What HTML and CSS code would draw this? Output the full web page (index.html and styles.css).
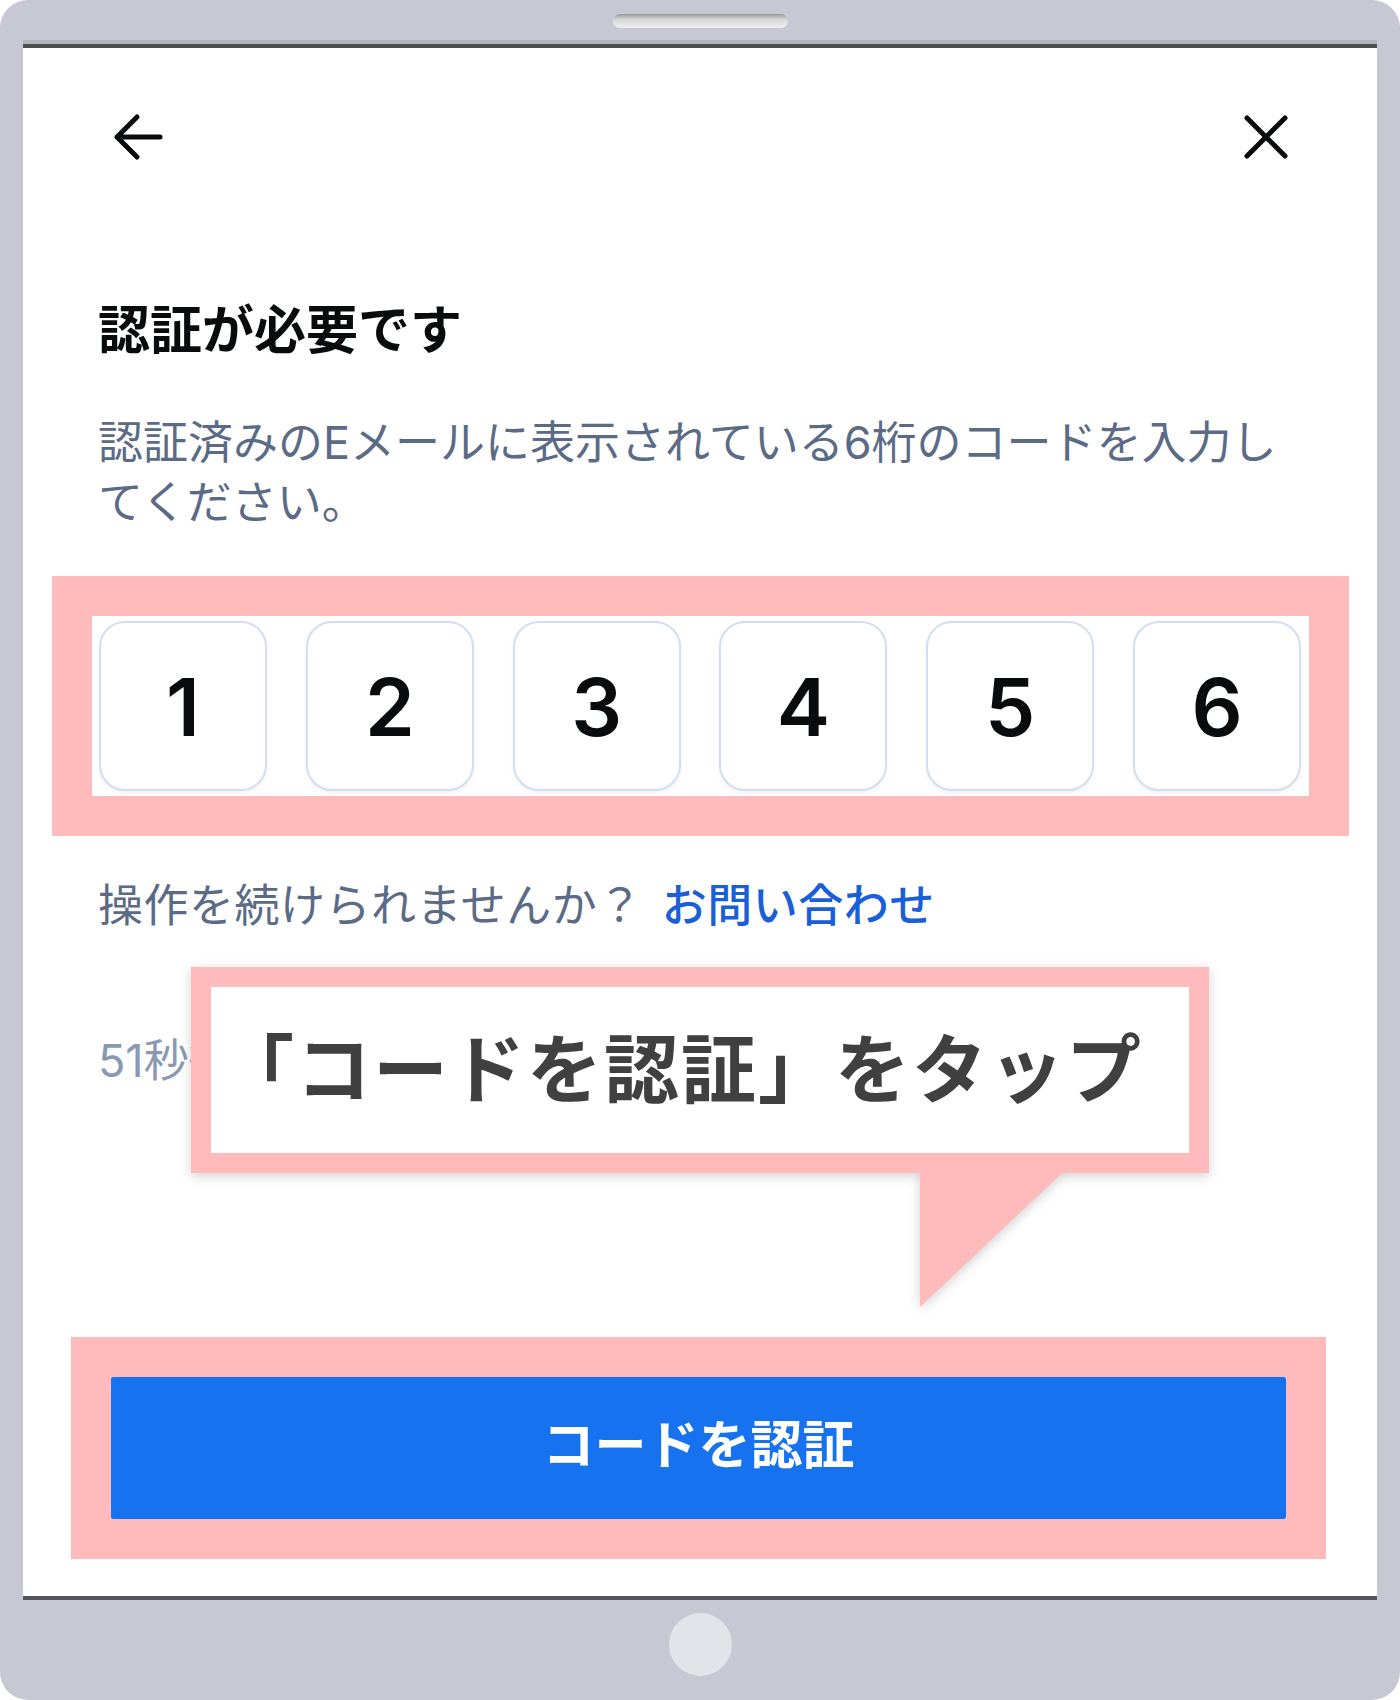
FILE: index.html
```html
<!DOCTYPE html>
<html lang="ja">
<head>
    <meta charset="UTF-8">
    <meta name="viewport" content="width=device-width, initial-scale=1.0">
    <title>認証が必要です</title>
    <link rel="stylesheet" href="styles.css">
</head>
<body>

<div class="device">

    <!-- top bezel with speaker -->
    <div class="bezel-top">
        <div class="speaker"></div>
    </div>

    <div class="screen">
        <div class="screen-edge"></div>

        <div class="screen-body">
            <div class="nav">
                <svg class="nav-icon" viewBox="0 0 50 50">
                    <path d="M47 25H4 M24 5 L4 25 L24 45" />
                </svg>
                <svg class="nav-icon" viewBox="0 0 50 50">
                    <path d="M6 6 L44 44 M44 6 L6 44" />
                </svg>
            </div>

            <h1 class="title">認証が必要です</h1>
            <p class="desc">認証済みのEメールに表示されている6桁のコードを入力してください。</p>

            <!-- code inputs (highlighted) -->
            <div class="mark mark-code">
                <div class="code-row">
                    <div class="code-box">1</div>
                    <div class="code-box">2</div>
                    <div class="code-box">3</div>
                    <div class="code-box">4</div>
                    <div class="code-box">5</div>
                    <div class="code-box">6</div>
                </div>
            </div>

            <p class="help">操作を続けられませんか？<a href="#" class="help-link">お問い合わせ</a></p>
            <p class="resend">51秒後にコードを再送信できます</p>

            <!-- verify button (highlighted) -->
            <div class="mark mark-btn">
                <button type="button" class="verify">コードを認証</button>
            </div>
        </div>

        <!-- speech bubble -->
        <div class="callout">
            <div class="callout-box">「コードを認証」をタップ</div>
        </div>
    </div>

    <!-- bottom bezel with home button -->
    <div class="bezel-bottom">
        <div class="home"></div>
    </div>

</div>

</body>
</html>
```

FILE: styles.css
```css
body {
    margin: 0;
    padding: 0;
    font-family: Inter, "Noto Sans CJK JP", sans-serif;
    background-color: #fff;
}

.device {
    width: 1400px;
    height: 1700px;
    background-color: #c8c8d4;
    border-radius: 28px;
    display: flex;
    flex-direction: column;
    padding: 0 23px;
    box-sizing: border-box;
}

.bezel-top {
    height: 40px;
    display: flex;
    justify-content: center;
}

.speaker {
    width: 175px;
    height: 14px;
    margin-top: 14px;
    border-radius: 7px;
    background: linear-gradient(#999, #d8d8d8 40%, #f0f0f0);
}

.screen {
    position: relative;
    height: 1560px;
    box-sizing: border-box;
    background-color: #fff;
    display: flex;
    flex-direction: column;
    border-bottom: 4px solid #55555c;
}

.screen-edge {
    height: 4px;
    background-color: #4f4f4f;
    border-top: 4px solid #b4b4bb;
}

.screen-body {
    flex: 1;
    display: flex;
    flex-direction: column;
    padding: 0 78px 37px 75px;
}

.nav {
    display: flex;
    justify-content: space-between;
    margin-top: 64px;
    padding: 0 8px 0 15px;
}

.nav-icon {
    width: 50px;
    height: 50px;
    fill: none;
    stroke: #0a0b0d;
    stroke-width: 5;
    stroke-linecap: round;
    stroke-linejoin: round;
}

.title {
    margin: 138px 0 0;
    font-size: 52px;
    line-height: 62px;
    font-weight: 700;
    color: #0a0b0d;
}

.desc {
    margin: 51px 0 0;
    font-size: 45px;
    line-height: 60px;
    color: #5b6b86;
}

/* pink highlight frames */
.mark {
    border: 40px solid #ffbbbc;
    background-color: #fff;
}

.mark-code {
    margin: 43px -50px 0 -46px;
}

.code-row {
    display: flex;
    justify-content: space-between;
    padding: 5px 8px 5px 7px;
}

.code-box {
    width: 168px;
    height: 170px;
    box-sizing: border-box;
    border: 2px solid #d3def0;
    border-radius: 26px;
    box-shadow: 0 2px 4px rgba(0, 0, 0, 0.06);
    display: flex;
    align-items: center;
    justify-content: center;
    font-size: 80px;
    font-weight: 600;
    color: #0a0b0d;
}

.help {
    margin: 40px 0 0;
    font-size: 45px;
    line-height: 60px;
    letter-spacing: 0.5px;
    color: #5b6b86;
}

.help-link {
    margin-left: 19px;
    color: #1a5fd8;
    font-weight: 500;
    letter-spacing: 0.5px;
    text-decoration: none;
}

.resend {
    margin: 95px 0 0;
    font-size: 45px;
    line-height: 60px;
    color: #8a99b1;
    white-space: nowrap;
}

.mark-btn {
    margin: auto -27px 0 -27px;
}

.verify {
    display: block;
    width: 100%;
    height: 142px;
    padding: 0 0 14px;
    border: none;
    border-radius: 2px;
    background-color: #1672ef;
    color: #fff;
    font-family: "Noto Sans CJK JP", sans-serif;
    font-size: 52px;
    font-weight: 700;
}

.callout {
    position: absolute;
    left: 168px;
    top: 927px;
    width: 1018px;
    height: 206px;
    filter: drop-shadow(0 3px 6px rgba(0, 0, 0, 0.18));
}

.callout-box {
    height: 100%;
    box-sizing: border-box;
    border: 20px solid #ffbbbc;
    padding: 0 38px 12px 0;
    background-color: #fff;
    display: flex;
    align-items: center;
    justify-content: center;
    font-family: "Noto Sans CJK JP", sans-serif;
    font-size: 75px;
    font-weight: 700;
    letter-spacing: 2px;
    color: #404040;
}

.callout::after {
    content: "";
    position: absolute;
    left: 729px;
    top: 206px;
    width: 142px;
    height: 134px;
    background-color: #ffbbbc;
    clip-path: polygon(0 0, 100% 0, 0 100%);
}

.bezel-bottom {
    flex: 1;
    display: flex;
    justify-content: center;
}

.home {
    width: 63px;
    height: 63px;
    margin-top: 13px;
    border-radius: 50%;
    background-color: #e3e4ea;
}
```
